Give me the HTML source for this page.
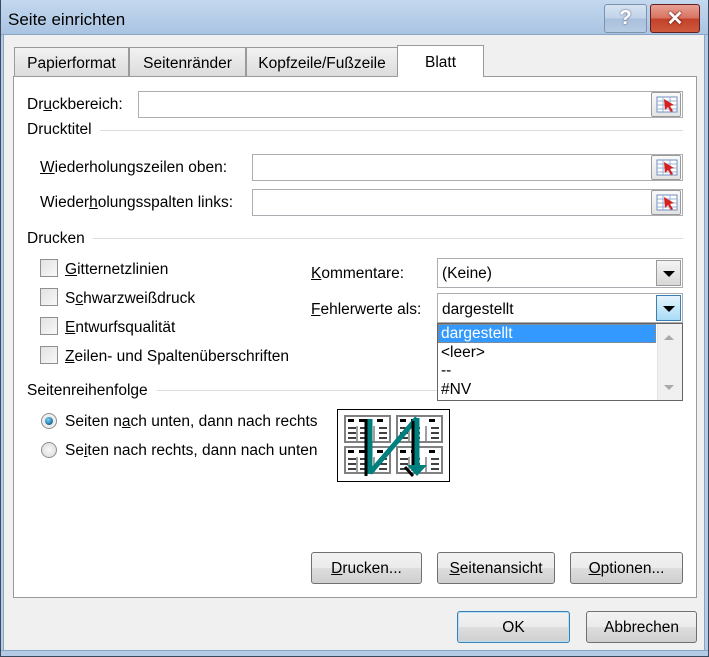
<!DOCTYPE html>
<html><head><meta charset="utf-8"><style>
*{margin:0;padding:0;box-sizing:border-box}
body{width:709px;height:657px;overflow:hidden;background:#f0f0f0;font-family:"Liberation Sans",sans-serif;font-size:15.5px;color:#000;position:relative}
.a{position:absolute}
.frame{position:absolute;left:0;top:0;width:709px;height:657px;border:1px solid #3a4a5c;border-top:none}
.title{left:0;top:0;width:709px;height:35px;background:linear-gradient(#c4d8ee,#a9c4e2);border-bottom:1px solid #8aa4c4}
.sideL{left:1px;top:35px;width:3px;height:621px;background:#b4cbe6;border-right:1px solid #8aa4c4}
.sideR{left:704px;top:35px;width:4px;height:621px;background:#b4cbe6;border-left:1px solid #8aa4c4}
.bot{left:1px;top:650px;width:707px;height:7px;background:#b4cbe6;border-top:1px solid #8aa4c4}
.t{white-space:nowrap;line-height:20px}
.tab{position:absolute;top:47px;height:29px;background:linear-gradient(#f2f2f2,#dcdcdc);border:1px solid #9a9a9a;border-bottom:none;text-align:center;line-height:31px;font-size:15.5px}
.panel{left:13px;top:76px;width:684px;height:522px;background:#fff;border:1px solid #9a9a9a}
.inp{position:absolute;background:#fff;border:1px solid #abadb3;height:27px}
.ib{position:absolute;width:30px;height:25px;border:1px solid #9a9a9a;border-radius:2px;background:linear-gradient(#fafafa,#e4e4e4)}
.line{position:absolute;height:1px;background:#dcdcdc}
.cb{position:absolute;width:18px;height:18px;border:1px solid #8e8f8f;background:linear-gradient(135deg,#e2e2e2,#f8f8f8)}
.btn{position:absolute;height:32px;border:1px solid #707070;border-radius:3px;background:linear-gradient(#f2f2f2 0,#ebebeb 50%,#dddddd 51%,#cfcfcf 100%);text-align:center;line-height:32px}
u{text-decoration:underline}
</style></head><body>
<div class="a title"></div>
<div class="a t" style="left:8px;top:10px;font-size:17px">Seite einrichten</div>
<div class="a" style="left:604px;top:4px;width:43px;height:29px;border:1px solid #7d92ad;border-radius:3px;background:linear-gradient(#d6e3f2 0,#c0d3ea 50%,#a9c0dc 51%,#b7cbe3 100%);color:#fff;font-weight:bold;font-size:20px;text-align:center;line-height:27px;text-shadow:0 0 2px #556">?</div>
<div class="a" style="left:650px;top:4px;width:50px;height:29px;border:1px solid #5e2020;border-radius:3px;background:linear-gradient(#e8a093 0,#d8715f 50%,#c1402a 51%,#cf5a3c 100%);color:#fff;font-weight:bold;font-size:20px;text-align:center;line-height:28px;text-shadow:0 0 2px #400">✕</div>
<div class="a sideL"></div><div class="a sideR"></div><div class="a bot"></div>

<div class="tab" style="left:14px;width:115px">Papierformat</div>
<div class="tab" style="left:129px;width:117px">Seitenränder</div>
<div class="tab" style="left:246px;width:152px">Kopfzeile/Fußzeile</div>
<div class="a panel"></div>
<div class="tab" style="left:397px;top:45px;height:32px;width:87px;background:#fff;line-height:34px;z-index:2">Blatt</div>

<div class="a t" style="left:27px;top:95px">Dr<u>u</u>ckbereich:</div>
<div class="inp" style="left:138px;top:91px;width:545px"></div>
<div class="ib" style="left:651px;top:92px"></div>

<div class="a t" style="left:27px;top:120px">Drucktitel</div>
<div class="line" style="left:100px;top:130px;width:583px"></div>

<div class="a t" style="left:40px;top:158px"><u>W</u>iederholungszeilen oben:</div>
<div class="inp" style="left:252px;top:154px;width:431px"></div>
<div class="ib" style="left:651px;top:155px"></div>
<div class="a t" style="left:40px;top:193px">Wieder<u>h</u>olungsspalten links:</div>
<div class="inp" style="left:252px;top:189px;width:431px"></div>
<div class="ib" style="left:651px;top:190px"></div>

<div class="a t" style="left:27px;top:229px">Drucken</div>
<div class="line" style="left:93px;top:238px;width:590px"></div>

<div class="cb" style="left:40px;top:259px"></div><div class="a t" style="left:65px;top:260px"><u>G</u>itternetzlinien</div>
<div class="cb" style="left:40px;top:288px"></div><div class="a t" style="left:65px;top:289px">S<u>c</u>hwarzweißdruck</div>
<div class="cb" style="left:40px;top:317px"></div><div class="a t" style="left:65px;top:318px"><u>E</u>ntwurfsqualität</div>
<div class="cb" style="left:40px;top:346px"></div><div class="a t" style="left:65px;top:347px"><u>Z</u>eilen- und Spaltenüberschriften</div>

<div class="a t" style="left:311px;top:264px"><u>K</u>ommentare:</div>
<div class="inp" style="left:437px;top:258px;width:246px;height:30px"></div>
<div class="a t" style="left:442px;top:264px">(Keine)</div>
<div class="a" style="left:656px;top:260px;width:25px;height:26px;border:1px solid #9a9a9a;background:linear-gradient(#f4f4f4,#d8d8d8)"><div style="margin:10px auto 0;width:0;height:0;border-left:6px solid transparent;border-right:6px solid transparent;border-top:6px solid #000"></div></div>

<div class="a t" style="left:311px;top:300px"><u>F</u>ehlerwerte als:</div>
<div class="inp" style="left:437px;top:293px;width:246px;height:30px"></div>
<div class="a t" style="left:442px;top:300px">dargestellt</div>
<div class="a" style="left:656px;top:295px;width:25px;height:26px;border:1px solid #3c7fb1;background:linear-gradient(#e5f4fc,#a9dbf6)"><div style="margin:10px auto 0;width:0;height:0;border-left:6px solid transparent;border-right:6px solid transparent;border-top:6px solid #000"></div></div>

<div class="a" style="left:437px;top:323px;width:246px;height:78px;background:#fff;border:1px solid #646464"></div>
<div class="a" style="left:438px;top:324px;width:218px;height:19px;background:#3399ff;border:1px dotted #c08040"></div>
<div class="a t" style="left:441px;top:324px;color:#fff">dargestellt</div>
<div class="a t" style="left:441px;top:343px">&lt;leer&gt;</div>
<div class="a t" style="left:441px;top:361px">--</div>
<div class="a t" style="left:441px;top:380px">#NV</div>
<div class="a" style="left:657px;top:324px;width:25px;height:76px;background:#f0f0f0;border-left:1px solid #e4e4e4"></div>
<div class="a" style="left:664px;top:335px;width:0;height:0;border-left:5px solid transparent;border-right:5px solid transparent;border-bottom:5px solid #aaa"></div>
<div class="a" style="left:664px;top:385px;width:0;height:0;border-left:5px solid transparent;border-right:5px solid transparent;border-top:5px solid #aaa"></div>

<div class="a t" style="left:27px;top:381px">Seitenreihenfolge</div>
<div class="line" style="left:157px;top:390px;width:280px"></div>

<div class="a" style="left:41px;top:413px;width:16px;height:16px;border-radius:50%;border:1px solid #8e8f8f;background:#eee"><div style="margin:3px;width:8px;height:8px;border-radius:50%;background:radial-gradient(circle at 40% 35%,#7fd0f5,#1a6ea0 70%,#0a3f60)"></div></div>
<div class="a t" style="left:65px;top:412px">Seiten n<u>a</u>ch unten, dann nach rechts</div>
<div class="a" style="left:41px;top:442px;width:16px;height:16px;border-radius:50%;border:1px solid #8e8f8f;background:radial-gradient(circle,#f8f8f8,#d8d8d8)"></div>
<div class="a t" style="left:65px;top:441px">Se<u>i</u>ten nach rechts, dann nach unten</div>

<svg class="a" style="left:337px;top:409px" width="113" height="73" viewBox="0 0 113 73">
<rect x="0.5" y="0.5" width="112" height="72" fill="#fff" stroke="#000"/>
<g fill="#fff" stroke="#808080" stroke-width="2">
<rect x="8" y="7" width="45" height="26"/><rect x="60" y="7" width="45" height="26"/>
<rect x="8" y="38" width="45" height="26"/><rect x="60" y="38" width="45" height="26"/>
</g>
<g fill="#000">
<rect x="11" y="10" width="6" height="3"/><rect x="22" y="10" width="6" height="3"/><rect x="40" y="10" width="6" height="3"/>
<rect x="63" y="10" width="6" height="3"/><rect x="74" y="10" width="6" height="3"/><rect x="92" y="10" width="6" height="3"/>
<rect x="11" y="41" width="6" height="3"/><rect x="22" y="41" width="6" height="3"/><rect x="40" y="41" width="6" height="3"/>
<rect x="63" y="41" width="6" height="3"/><rect x="74" y="41" width="6" height="3"/><rect x="92" y="41" width="6" height="3"/>
</g>
<g stroke="#000" stroke-width="1.5">
<path d="M11 19h8M11 24h8M11 29h8M23 19h8M23 24h8M23 29h8M42 19h8M42 24h8M42 29h8M63 19h8M63 24h8M63 29h8M75 19h8M75 24h8M75 29h8M94 19h8M94 24h8M94 29h8M11 50h8M11 55h8M11 60h8M23 50h8M23 55h8M23 60h8M42 50h8M42 55h8M42 60h8M63 50h8M63 55h8M63 60h8M75 50h8M75 55h8M75 60h8M94 50h8M94 55h8M94 60h8"/>
<path d="M20 17v15M37 17v15M72 17v15M89 17v15M20 48v15M37 48v15M72 48v15M89 48v15" stroke="#808080"/>
</g>
<path d="M29 10v57" stroke="#000" stroke-width="3"/>
<path d="M33 10v55" stroke="#007f7f" stroke-width="5"/>
<path d="M33 64L80 9" stroke="#007f7f" stroke-width="5"/>
<path d="M76 12v50" stroke="#000" stroke-width="3"/>
<path d="M80 9v50" stroke="#007f7f" stroke-width="5"/>
<path d="M70 56l10 11l10-11z" fill="#007f7f"/>
<path d="M68 58l8 9" stroke="#000" stroke-width="3"/>
</svg>

<div class="btn" style="left:311px;top:552px;width:111px"><u>D</u>rucken...</div>
<div class="btn" style="left:437px;top:552px;width:118px"><u>S</u>eitenansicht</div>
<div class="btn" style="left:570px;top:552px;width:113px"><u>O</u>ptionen...</div>
<div class="btn" style="left:457px;top:611px;width:113px;border-color:#3c7fb1;box-shadow:inset 0 0 0 1px #b6e0f7">OK</div>
<div class="btn" style="left:586px;top:611px;width:111px">Abbrechen</div>

<svg class="a" style="left:656px;top:96px" width="22" height="17" viewBox="0 0 22 17"><rect x="1" y="1" width="20" height="15" fill="#fff" stroke="#6f8fbf"/><path d="M1 5h20M1 9h20M1 13h20M7 1v15M14 1v15" stroke="#9ab3d6"/><path d="M8 3l10 6l-4 1l3 5l-2 1l-3-5l-3 3z" fill="#d62020"/></svg>
<svg class="a" style="left:656px;top:159px" width="22" height="17" viewBox="0 0 22 17"><rect x="1" y="1" width="20" height="15" fill="#fff" stroke="#6f8fbf"/><path d="M1 5h20M1 9h20M1 13h20M7 1v15M14 1v15" stroke="#9ab3d6"/><path d="M8 3l10 6l-4 1l3 5l-2 1l-3-5l-3 3z" fill="#d62020"/></svg>
<svg class="a" style="left:656px;top:194px" width="22" height="17" viewBox="0 0 22 17"><rect x="1" y="1" width="20" height="15" fill="#fff" stroke="#6f8fbf"/><path d="M1 5h20M1 9h20M1 13h20M7 1v15M14 1v15" stroke="#9ab3d6"/><path d="M8 3l10 6l-4 1l3 5l-2 1l-3-5l-3 3z" fill="#d62020"/></svg>
<div class="frame"></div>
</body></html>
